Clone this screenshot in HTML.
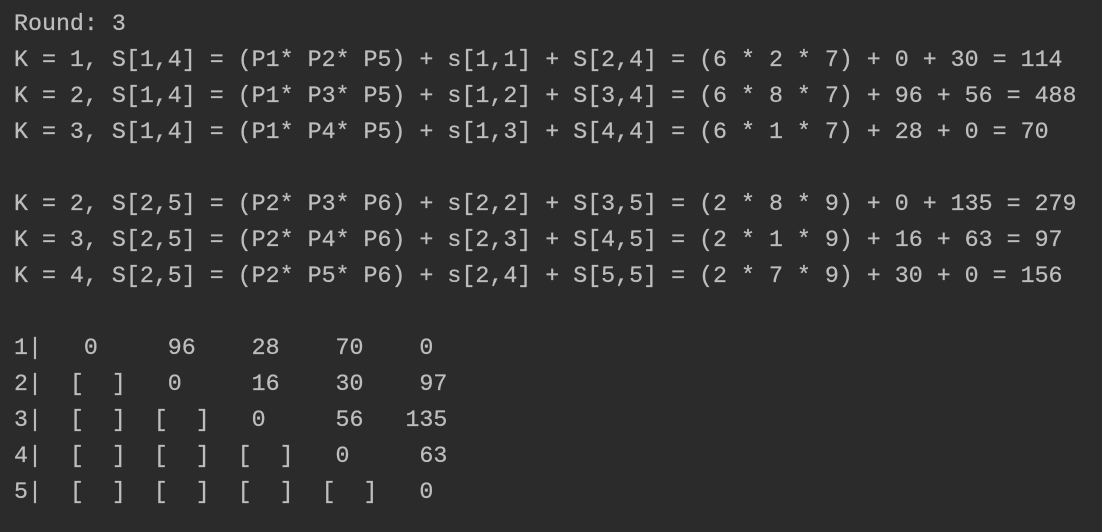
<!DOCTYPE html>
<html><head><meta charset="utf-8"><style>
html,body{margin:0;padding:0;background:#2b2b2b;width:1102px;height:532px;overflow:hidden}
pre{margin:0;padding:6px 0 0 14px;font-family:"Liberation Mono","DejaVu Sans Mono",monospace;font-size:23.3px;line-height:36px;color:#bdbdbd;-webkit-text-stroke:0.25px #bdbdbd}
</style></head><body><pre>Round: 3
K = 1, S[1,4] = (P1* P2* P5) + s[1,1] + S[2,4] = (6 * 2 * 7) + 0 + 30 = 114
K = 2, S[1,4] = (P1* P3* P5) + s[1,2] + S[3,4] = (6 * 8 * 7) + 96 + 56 = 488
K = 3, S[1,4] = (P1* P4* P5) + s[1,3] + S[4,4] = (6 * 1 * 7) + 28 + 0 = 70

K = 2, S[2,5] = (P2* P3* P6) + s[2,2] + S[3,5] = (2 * 8 * 9) + 0 + 135 = 279
K = 3, S[2,5] = (P2* P4* P6) + s[2,3] + S[4,5] = (2 * 1 * 9) + 16 + 63 = 97
K = 4, S[2,5] = (P2* P5* P6) + s[2,4] + S[5,5] = (2 * 7 * 9) + 30 + 0 = 156

1|   0     96    28    70    0
2|  [  ]   0     16    30    97
3|  [  ]  [  ]   0     56   135
4|  [  ]  [  ]  [  ]   0     63
5|  [  ]  [  ]  [  ]  [  ]   0</pre></body></html>
